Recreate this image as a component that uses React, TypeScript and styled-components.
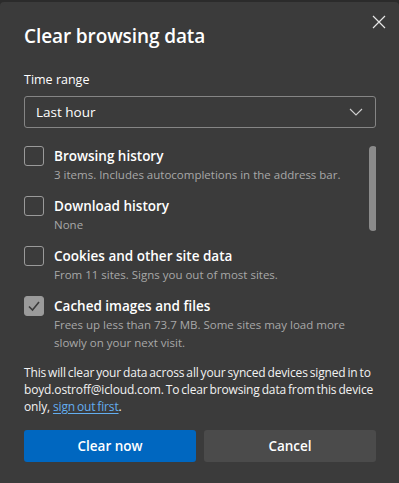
import React from 'react'
import styled, { createGlobalStyle } from 'styled-components'

const GlobalStyle = createGlobalStyle`
  html, body {
    margin: 0;
    padding: 0;
    background: #2b2b2b;
  }
  * {
    box-sizing: border-box;
  }
`

const Dialog = styled.div`
  margin-top: 2px;
  height: 481px;
  background: #3b3b3b;
  border-radius: 4px 4px 0 0;
  padding: 22px 23px 0 24px;
  font-family: "Open Sans", "Noto Sans", sans-serif;
  color: #ffffff;
  position: relative;
`

const CloseButton = styled.button`
  position: absolute;
  top: 9px;
  right: 9px;
  width: 22px;
  height: 22px;
  padding: 0;
  border: none;
  background: transparent;
  display: flex;
  align-items: center;
  justify-content: center;
`

const Title = styled.h1`
  margin: 0;
  font-size: 19px;
  font-weight: 600;
  line-height: 24px;
  letter-spacing: -0.1px;
`

const FieldLabel = styled.div`
  margin-top: 23px;
  font-size: 12.5px;
  line-height: 18px;
`

const Select = styled.div`
  margin-top: 7px;
  height: 32px;
  border: 1px solid #858585;
  border-radius: 3px;
  display: flex;
  align-items: center;
  justify-content: space-between;
  padding: 0 12px 0 11px;
  font-size: 13.5px;
`

const ListArea = styled.div`
  margin-top: 12px;
  height: 211px;
  display: flex;
  gap: 16px;
  overflow: hidden;
`

const List = styled.div`
  flex: 1;
  display: flex;
  flex-direction: column;
  gap: 12px;
  padding-top: 6px;
`

const Track = styled.div`
  width: 8px;
  padding-top: 6px;
  margin-right: -1px;
`

const Thumb = styled.div`
  width: 8px;
  height: 85px;
  border-radius: 4px;
  background: #8b8b8b;
`

const Row = styled.div`
  display: flex;
  gap: 10px;
  align-items: flex-start;
`

const Box = styled.div<{ $checked?: boolean }>`
  width: 20px;
  height: 20px;
  flex-shrink: 0;
  border-radius: 3px;
  border: 1px solid #9a9a9a;
  background: ${(p) => (p.$checked ? '#9b9b9b' : 'transparent')};
  display: flex;
  align-items: center;
  justify-content: center;
`

const RowText = styled.div`
  display: flex;
  flex-direction: column;
`

const RowTitle = styled.div`
  font-size: 13.5px;
  font-weight: 600;
  line-height: 20px;
`

const RowSub = styled.div`
  font-size: 11.5px;
  line-height: 18px;
  color: #a8a8a8;
  max-width: 298px;
`

const Notice = styled.p`
  margin: 13px 0 0;
  font-size: 12px;
  line-height: 17px;
  letter-spacing: -0.15px;
  word-spacing: -1px;
  color: #f2f2f2;
`

const Link = styled.a`
  color: #63aef0;
  text-decoration: underline;
  text-underline-offset: 2px;
  margin-left: 1px;
`

const Buttons = styled.div`
  margin-top: 15px;
  display: grid;
  grid-template-columns: 1fr 1fr;
  gap: 8px;
`

const Button = styled.button<{ $primary?: boolean }>`
  height: 32px;
  border: none;
  border-radius: 3px;
  font-family: "Open Sans", "Noto Sans", sans-serif;
  font-size: 13.5px;
  font-weight: 600;
  color: #ffffff;
  background: ${(p) => (p.$primary ? '#0067c0' : '#4b4b4b')};
`

const items = [
  {
    title: 'Browsing history',
    sub: '3 items. Includes autocompletions in the address bar.',
    checked: false,
  },
  { title: 'Download history', sub: 'None', checked: false },
  {
    title: 'Cookies and other site data',
    sub: 'From 11 sites. Signs you out of most sites.',
    checked: false,
  },
  {
    title: 'Cached images and files',
    sub: 'Frees up less than 73.7 MB. Some sites may load more slowly on your next visit.',
    checked: true,
  },
]

export default function App () {
  return (
    <>
      <GlobalStyle />
      <Dialog>
        <CloseButton aria-label='Close'>
          <svg width='14' height='14' viewBox='0 0 14 14'>
            <path d='M1 1L13 13M13 1L1 13' stroke='#e6e6e6' strokeWidth='1.2' />
          </svg>
        </CloseButton>
        <Title>Clear browsing data</Title>
        <FieldLabel>Time range</FieldLabel>
        <Select>
          <span>Last hour</span>
          <svg width='14' height='8' viewBox='0 0 14 8'>
            <path d='M1 1L7 7L13 1' stroke='#d0d0d0' strokeWidth='1.1' fill='none' />
          </svg>
        </Select>
        <ListArea>
          <List>
            {items.map((item) => (
              <Row key={item.title}>
                <Box $checked={item.checked}>
                  {item.checked && (
                    <svg width='14' height='12' viewBox='0 0 14 12'>
                      <path d='M2 6.5L5.5 10L12 2' stroke='#3b3b3b' strokeWidth='1.6' fill='none' />
                    </svg>
                  )}
                </Box>
                <RowText>
                  <RowTitle>{item.title}</RowTitle>
                  <RowSub>{item.sub}</RowSub>
                </RowText>
              </Row>
            ))}
          </List>
          <Track>
            <Thumb />
          </Track>
        </ListArea>
        <Notice>
          This will clear your data across all your synced devices signed in to
          boyd.ostroff@icloud.com. To clear browsing data from this device
          only, <Link href='#'>sign out first</Link>.
        </Notice>
        <Buttons>
          <Button $primary>Clear now</Button>
          <Button>Cancel</Button>
        </Buttons>
      </Dialog>
    </>
  )
}
